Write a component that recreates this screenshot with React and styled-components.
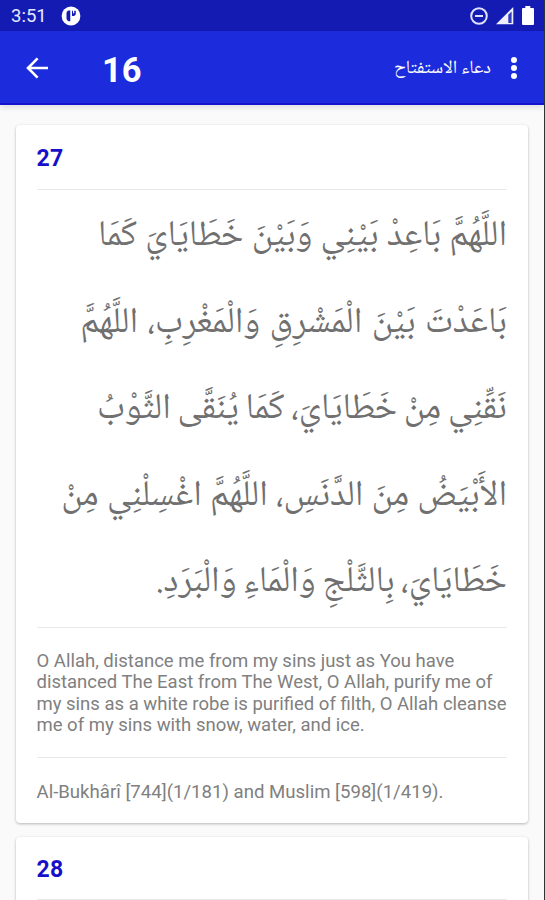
import React from 'react';
import styled, { createGlobalStyle } from 'styled-components';

const colors = {
  status: '#141bb3',
  bar: '#1c2bdc',
  number: '#1710c8',
  text: '#808080',
  arabic: '#707070',
  divider: '#e8e8e8',
};

const verse = [
  { text: 'اللَّهُمَّ بَاعِدْ بَيْنِي وَبَيْنَ خَطَايَايَ كَمَا', spacing: 0.2 },
  { text: 'بَاعَدْتَ بَيْنَ الْمَشْرِقِ وَالْمَغْرِبِ، اللَّهُمَّ', spacing: 1.4 },
  { text: 'نَقِّنِي مِنْ خَطَايَايَ، كَمَا يُنَقَّى الثَّوْبُ', spacing: -1.3 },
  { text: 'الأَبْيَضُ مِنَ الدَّنَسِ، اللَّهُمَّ اغْسِلْنِي مِنْ', spacing: 0.3 },
  { text: 'خَطَايَايَ، بِالثَّلْجِ وَالْمَاءِ وَالْبَرَدِ.', spacing: -1.5 },
];

const translation = [
  'O Allah, distance me from my sins just as You have',
  'distanced The East from The West, O Allah, purify me of',
  'my sins as a white robe is purified of filth, O Allah cleanse',
  'me of my sins with snow, water, and ice.',
];

const App = () => (
  <Screen>
    <GlobalStyle />
    <StatusBar>
      <Clock>3:51</Clock>
      <svg width='20' height='20' viewBox='0 0 20 20'>
        <circle cx='10' cy='10' r='9.4' fill='#fff' />
        <path d='M7.500 4.500Q5.500 5 5.500 7v5.500q.3 2.300 2.200 2.700h1.600V4.500zM11 4.800h1v2.400h1.200V4.800h1.600v3.400q-.6 1.700-2.200 1.800H11z' fill={colors.status} />
      </svg>
      <StatusIcons>
        <svg width='18' height='18' viewBox='0 0 18 18' fill='none' stroke='#dfe2ff' strokeWidth='2'>
          <circle cx='9' cy='9' r='7.8' />
          <path d='M5 9h8' />
        </svg>
        <svg width='18' height='18' viewBox='0 0 18 18'>
          <path d='M0 17.3L17.3 0v17.3z' fill='#eef0ff' />
          <path d='M12.300 7.800l3.300-3.300v11.400h-3.300z' fill='#3139bd' />
        </svg>
        <svg width='12' height='19' viewBox='0 0 12 19'>
          <path d='M3.300 0h5v2H11q1 0 1 1v15q0 1-1 1H1q-1 0-1-1V3q0-1 1-1h2.300z' fill='#fff' />
        </svg>
      </StatusIcons>
    </StatusBar>

    <AppBar>
      <svg width='23' height='22' viewBox='0 0 23 22' fill='none' stroke='#fff' strokeWidth='2.6'>
        <path d='M22 11H2.500M11.600 1.400L2 11l9.600 9.600' />
      </svg>
      <Chapter>16</Chapter>
      <ChapterTitle dir='rtl' lang='ar'>دعاء الاستفتاح</ChapterTitle>
      <svg width='8' height='24' viewBox='0 0 8 24' fill='#fff'>
        <circle cx='4' cy='4' r='3' />
        <circle cx='4' cy='12' r='3' />
        <circle cx='4' cy='20' r='3' />
      </svg>
    </AppBar>

    <List>
      <Card>
        <CardNumber $height={64}>27</CardNumber>
        <Verse dir='rtl' lang='ar'>
          {verse.map((line) => (
            <VerseLine key={line.text} $spacing={line.spacing}>{line.text}</VerseLine>
          ))}
        </Verse>
        <Translation>
          {translation.map((line) => <p key={line}>{line}</p>)}
        </Translation>
        <Reference>Al-Bukhârî [744](1/181) and Muslim [598](1/419).</Reference>
      </Card>
      <Card>
        <CardNumber $height={62}>28</CardNumber>
        <Verse />
      </Card>
    </List>
  </Screen>
);

const GlobalStyle = createGlobalStyle`
  * {
    box-sizing: border-box;
  }
  body {
    margin: 0;
    overflow: hidden;
    font-family: Roboto, sans-serif;
  }
  p {
    margin: 0;
  }
  svg {
    display: block;
    flex-shrink: 0;
  }
`;

const Screen = styled.div`
  display: flex;
  flex-direction: column;
  width: 545px;
  height: 900px;
  overflow: hidden;
  background: #fafafa;
  border-right: 1px solid #333;
`;

const StatusBar = styled.header`
  display: flex;
  align-items: center;
  height: 31px;
  flex-shrink: 0;
  padding: 0 10px 0 11px;
  background: ${colors.status};
  color: #e6e8ff;
`;

const Clock = styled.span`
  width: 50px;
  font-size: 18.5px;
  line-height: 31px;
  padding-top: 1px;
`;

const StatusIcons = styled.div`
  display: flex;
  align-items: center;
  gap: 8px;
  margin-left: auto;
`;

const AppBar = styled.nav`
  display: flex;
  align-items: center;
  height: 74px;
  flex-shrink: 0;
  padding: 2px 26px 0;
  background: ${colors.bar};
  border-bottom: 2px solid #1414cf;
  box-shadow: 0 3px 5px rgba(0, 0, 0, 0.1);
  color: #fff;
`;

const Chapter = styled.h1`
  margin: 4px 0 0 53px;
  font-size: 34.5px;
  font-weight: 700;
`;

const ChapterTitle = styled.span`
  margin: 1px 19px 0 auto;
  font-family: 'Noto Naskh Arabic', 'DejaVu Sans', sans-serif;
  font-size: 18.5px;
  white-space: nowrap;
`;

const List = styled.main`
  display: flex;
  flex-direction: column;
  flex: 1;
  min-height: 0;
  gap: 14px;
  padding: 20px 16px 0;
  overflow: hidden;
`;

const Card = styled.article`
  width: 512px;
  padding: 0 21px 0 20.5px;
  flex-shrink: 0;
  background: #fff;
  border-radius: 4px;
  box-shadow: 0 1px 3px rgba(0, 0, 0, 0.28);
`;

const CardNumber = styled.h2`
  height: ${({ $height }) => $height}px;
  margin: 0;
  padding-top: 2px;
  line-height: ${({ $height }) => $height - 1}px;
  font-size: 23px;
  font-weight: 700;
  letter-spacing: 0.3px;
  color: ${colors.number};
`;

const Verse = styled.div`
  min-height: 86px;
  border-top: 1px solid ${colors.divider};
  color: ${colors.arabic};
`;

const VerseLine = styled.p`
  height: 86.5px;
  line-height: 95px;
  font-family: 'Noto Naskh Arabic', 'DejaVu Sans', serif;
  font-size: 36px;
  word-spacing: ${({ $spacing }) => $spacing}px;
  white-space: nowrap;
`;

const Translation = styled.div`
  height: 130px;
  margin-top: 4px;
  padding-top: 23px;
  border-top: 1px solid ${colors.divider};
  font-size: 18.5px;
  line-height: 21.6px;
  color: ${colors.text};
  white-space: nowrap;
`;

const Reference = styled.p`
  height: 66px;
  padding-top: 1px;
  border-top: 1px solid ${colors.divider};
  font-size: 18.6px;
  line-height: 66px;
  color: ${colors.text};
`;

export default App;
